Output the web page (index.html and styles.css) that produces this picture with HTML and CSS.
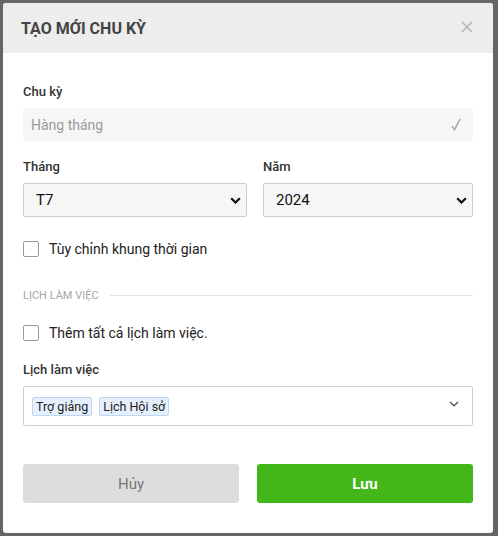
FILE: index.html
```html
<!DOCTYPE html>
<html lang="vi">
<head>
<meta charset="utf-8">
<title>Tạo mới chu kỳ</title>
<link rel="stylesheet" href="styles.css">
</head>
<body>
<div class="overlay">
  <div class="modal">
    <div class="modal-header">
      <h1 class="modal-title">TẠO MỚI CHU KỲ</h1>
      <svg class="close" width="12" height="12" viewBox="0 0 12 12"><path d="M1 1L11 11M11 1L1 11" stroke="#b0b0b0" stroke-width="1.4" fill="none"/></svg>
    </div>
    <div class="modal-body">
      <div class="field">
        <label class="label">Chu kỳ</label>
        <div class="readonly">
          <span>Hàng tháng</span>
          <svg width="10" height="13" viewBox="0 0 10 13"><path d="M1 8.2L3.6 11.5L9 1" stroke="#a8a8a8" stroke-width="1.6" fill="none"/></svg>
        </div>
      </div>
      <div class="row">
        <div class="field col">
          <label class="label">Tháng</label>
          <div class="select">
            <span>T7</span>
            <svg width="11" height="7" viewBox="0 0 11 7"><path d="M1.2 1.2L5.5 5.5L9.8 1.2" stroke="#111" stroke-width="2.2" fill="none"/></svg>
          </div>
        </div>
        <div class="field col">
          <label class="label">Năm</label>
          <div class="select">
            <span>2024</span>
            <svg width="11" height="7" viewBox="0 0 11 7"><path d="M1.2 1.2L5.5 5.5L9.8 1.2" stroke="#111" stroke-width="2.2" fill="none"/></svg>
          </div>
        </div>
      </div>
      <div class="check first-check">
        <span class="box"></span>
        <span>Tùy chỉnh khung thời gian</span>
      </div>
      <div class="divider">
        <span>LỊCH LÀM VIỆC</span>
        <span class="line"></span>
      </div>
      <div class="check">
        <span class="box"></span>
        <span>Thêm tất cả lịch làm việc.</span>
      </div>
      <div class="field schedules">
        <label class="label">Lịch làm việc</label>
        <div class="multi">
          <span class="tag">Trợ giảng</span>
          <span class="tag">Lịch Hội sở</span>
          <svg class="multi-arrow" width="10" height="6" viewBox="0 0 10 6"><path d="M1 1L5 4.8L9 1" stroke="#555" stroke-width="1.3" fill="none"/></svg>
        </div>
      </div>
      <div class="actions">
        <button class="btn btn-cancel">Hủy</button>
        <button class="btn btn-save">Lưu</button>
      </div>
    </div>
  </div>
</div>
</body>
</html>
```

FILE: styles.css
```css
html, body {
  margin: 0;
  padding: 0;
}
body {
  background: #666666;
  font-family: Roboto, "Liberation Sans", Arial, sans-serif;
  width: 498px;
  height: 536px;
  overflow: hidden;
}
.overlay {
  padding: 3px 5px 3px 3px;
}
.modal {
  width: 490px;
  height: 530px;
  background: #ffffff;
  border-radius: 3px;
  overflow: hidden;
  display: flex;
  flex-direction: column;
}
.modal-header {
  height: 50px;
  background: #ededed;
  display: flex;
  align-items: center;
  justify-content: space-between;
  padding: 0 20px 0 18px;
  flex-shrink: 0;
}
.modal-title {
  margin: 0;
  font-size: 16px;
  font-weight: 700;
  color: #444444;
}
.close {
  display: block;
  margin-top: -2px;
}
.modal-body {
  padding: 31px 20px 0 20px;
}
.label {
  display: block;
  font-size: 13px;
  line-height: 16px;
  color: #333333;
  font-weight: 500;
  margin-bottom: 8px;
}
.readonly {
  height: 33px;
  background: #f6f6f6;
  border-radius: 3px;
  display: flex;
  align-items: center;
  justify-content: space-between;
  padding: 0 12px 0 8px;
  box-sizing: border-box;
  font-size: 14px;
  color: #9b9b9b;
}
.row {
  display: flex;
  gap: 16px;
  margin-top: 18px;
}
.col {
  flex: 1;
}
.col:first-child {
  flex: 0 0 224px;
}
.select {
  height: 34px;
  box-sizing: border-box;
  border: 1px solid #cccccc;
  border-radius: 2px;
  background: #f6f6f6;
  display: flex;
  align-items: center;
  justify-content: space-between;
  padding: 0 5px 0 12px;
  font-size: 15px;
  color: #111111;
}
.check {
  display: flex;
  align-items: center;
  gap: 10px;
  font-size: 14px;
  color: #222222;
  height: 16px;
}
.first-check {
  margin-top: 24px;
}
.box {
  width: 16px;
  height: 16px;
  box-sizing: border-box;
  border: 1px solid #9a9a9a;
  border-radius: 2px;
  background: #ffffff;
  flex-shrink: 0;
}
.divider {
  display: flex;
  align-items: center;
  gap: 11px;
  margin-top: 31px;
  margin-bottom: 23px;
  font-size: 11px;
  color: #a6a6a6;
  height: 14px;
}
.line {
  flex: 1;
  height: 1px;
  background: #e4e4e4;
}
.schedules {
  margin-top: 21px;
}
.multi {
  position: relative;
  height: 40px;
  box-sizing: border-box;
  border: 1px solid #cccccc;
  border-radius: 2px;
  display: flex;
  align-items: center;
  gap: 7px;
  padding: 0 8px;
}
.tag {
  background: #e5f0fc;
  border: 1px solid #bcd6f3;
  border-radius: 2px;
  font-size: 12.5px;
  color: #222222;
  height: 19px;
  line-height: 18px;
  padding: 0 3px;
  box-sizing: border-box;
}
.multi-arrow {
  position: absolute;
  right: 13px;
  top: 14px;
}
.actions {
  display: flex;
  gap: 18px;
  margin-top: 38px;
}
.btn {
  flex: 1;
  height: 39px;
  border: none;
  border-radius: 3px;
  font-family: Roboto, "Liberation Sans", Arial, sans-serif;
  font-size: 15px;
  cursor: pointer;
}
.btn-cancel {
  background: #dddddd;
  color: #777777;
}
.btn-save {
  background: #43b619;
  color: #ffffff;
  font-weight: 700;
}
```
